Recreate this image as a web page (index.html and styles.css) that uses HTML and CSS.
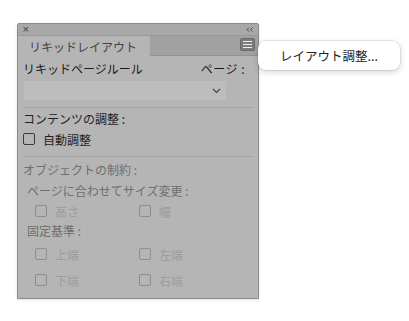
FILE: index.html
```html
<!DOCTYPE html>
<html lang="ja">
<head>
<meta charset="utf-8">
<link rel="stylesheet" href="styles.css">
</head>
<body>
<div class="panel">
  <div class="titlebar"><span class="close">×</span><svg class="collapse" width="7" height="5" viewBox="0 0 7 5"><path d="M3 0.5L1 2.5L3 4.5M6.5 0.5L4.5 2.5L6.5 4.5" fill="none" stroke="#444" stroke-width="0.9"/></svg></div>
  <div class="tabs">
    <div class="tab">リキッドレイアウト</div>
    <div class="tabfill"><div class="menubtn"><i></i><i></i><i></i></div></div>
  </div>
  <div class="content">
    <div class="row-label"><span>リキッドページルール</span><span class="page">ページ :</span></div>
    <div class="select"><svg width="9" height="6" viewBox="0 0 9 6"><path d="M1 1l3.5 3.5L8 1" fill="none" stroke="#444" stroke-width="1.2"/></svg></div>
    <div class="sep"></div>
    <div class="label first-label">コンテンツの調整 :</div>
    <div class="check"><span class="box"></span>自動調整</div>
    <div class="sep sep2"></div>
    <div class="label dim">オブジェクトの制約 :</div>
    <div class="label dim indent">ページに合わせてサイズ変更 :</div>
    <div class="grid first">
      <div class="check off"><span class="box"></span>高さ</div>
      <div class="check off"><span class="box"></span>幅</div>
    </div>
    <div class="label dim indent anchor">固定基準 :</div>
    <div class="grid second">
      <div class="check off"><span class="box"></span>上端</div>
      <div class="check off"><span class="box"></span>左端</div>
      <div class="check off"><span class="box"></span>下端</div>
      <div class="check off"><span class="box"></span>右端</div>
    </div>
  </div>
</div>
<div class="popup">レイアウト調整...</div>
</body>
</html>
```
FILE: styles.css
```css
html, body { margin: 0; padding: 0; background: #fff; }
body {
  font-family: "Noto Sans CJK JP", "Noto Sans", sans-serif;
  font-size: 12px;
  color: #1f1f1f;
  width: 409px;
  height: 321px;
  position: relative;
  overflow: hidden;
}
.panel {
  margin: 23px 0 0 17px;
  width: 240px;
  height: 274px;
  border: 1px solid #8c8c8c;
  background: #b5b5b5;
  box-shadow: 0 1px 3px rgba(0,0,0,0.12);
  border-radius: 2px 2px 0 0;
}
.titlebar {
  height: 11px;
  background: #a8a8a8;
  display: flex;
  justify-content: space-between;
  align-items: center;
  padding: 0 5px 0 4px;
  font-family: "DejaVu Sans", sans-serif;
  font-size: 9px;
  line-height: 11px;
  color: #3a3a3a;
  border-radius: 2px 2px 0 0;
}
.tabs {
  display: flex;
  height: 20px;
  border-top: 1px solid #999;
}
.tab {
  width: 132px;
  background: #b5b5b5;
  color: #444;
  display: flex;
  align-items: center;
  padding-left: 11px;
  box-sizing: border-box;
  font-size: 12px;
}
.tabfill {
  flex: 1;
  background: #a1a1a1;
  border-bottom: 1px solid #939393;
  display: flex;
  justify-content: flex-end;
  align-items: flex-start;
  padding: 2px 3px 0 0;
}
.menubtn {
  width: 15px;
  height: 13px;
  box-sizing: border-box;
  background: #7c7c7c;
  border: 1px solid #6a6a6a;
  border-radius: 2px;
  display: flex;
  flex-direction: column;
  justify-content: center;
  align-items: center;
  gap: 2px;
}
.menubtn i { display: block; width: 9px; height: 1px; background: #eee; }
.content { padding: 3px 12px 0 5px; }
.row-label {
  display: flex;
  justify-content: space-between;
  height: 20px;
  line-height: 20px;
  color: #1a1a1a;
}
.page { letter-spacing: 0.5px; margin-right: 1px; }
.select {
  margin: 2px 0 0 1px;
  width: 202px;
  height: 19px;
  background: #bdbdbd;
  display: flex;
  justify-content: flex-end;
  align-items: center;
  padding-right: 5px;
  box-sizing: border-box;
}
.sep { height: 1px; background: #a3a3a3; margin: 7px 0 0 0; width: 230px; }
.sep2 { margin-top: 6px; }
.label { height: 18px; line-height: 18px; margin-top: 4px; }
.first-label { margin-top: 2px; }
.check {
  display: flex;
  align-items: center;
  height: 22px;
  gap: 8px;
  color: #1e1e1e;
}
.box {
  width: 10px;
  height: 10px;
  border: 1px solid #3a3a3a;
  border-radius: 2px;
  box-sizing: content-box;
  flex: none;
}
.dim { color: #6e6e6e; }
.indent { padding-left: 4px; margin-top: 3px; }
.anchor { margin-top: 0; }
.grid {
  display: grid;
  grid-template-columns: 104px 1fr;
  padding-left: 12px;
  row-gap: 4px;
}
.grid.first { margin-top: 0; }
.grid.second { margin-top: 3px; }
.check.off { color: #9c9c9c; }
.check.off .box { border-color: #8e8e8e; }
.popup {
  position: absolute;
  left: 258px;
  top: 41px;
  width: 142px;
  height: 29px;
  background: #fff;
  border-radius: 8px;
  box-shadow: 0 0 0 1px rgba(0,0,0,0.08), 0 2px 6px rgba(0,0,0,0.18);
  display: flex;
  align-items: center;
  justify-content: center;
  color: #222;
  font-size: 12.5px;
}
```
